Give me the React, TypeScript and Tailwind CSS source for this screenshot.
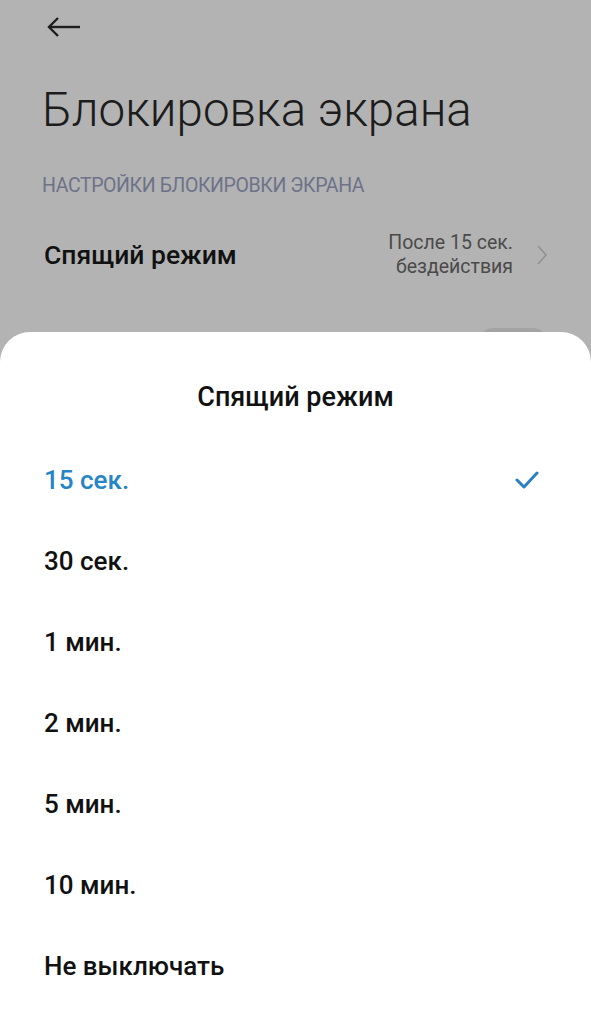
import { useState } from "react";

const options = ["15 сек.", "30 сек.", "1 мин.", "2 мин.", "5 мин.", "10 мин.", "Не выключать"];

export default function App() {
    const [selected, setSelected] = useState(0);

    return (
        <div
            className="relative h-[1011px] w-full overflow-hidden bg-[#b3b3b3]"
            style={{ fontFamily: "Roboto, 'Noto Sans', sans-serif" }}
        >
            {/* settings page behind the sheet */}
            <div className="px-[42px]">
                <div className="h-[54px] flex items-center pl-[5px]">
                    <svg width="34" height="20" viewBox="0 0 34 20" fill="none" stroke="#1e1e1e" strokeWidth="2.4">
                        <path d="M33 10H2" />
                        <path d="M11 1L2 10l9 9" />
                    </svg>
                </div>
                <h1 className="mt-[27px] text-[47.5px] leading-[58px] font-light text-[#1c1c1c]">
                    Блокировка экрана
                </h1>
                <div className="mt-[35px] text-[19.5px] leading-[24px] text-[#6d7289] tracking-[-0.4px]">
                    НАСТРОЙКИ БЛОКИРОВКИ ЭКРАНА
                </div>
                <div className="mt-[33px] flex items-center justify-between">
                    <span className="pl-[2px] text-[26.5px] font-medium text-[#111]">Спящий режим</span>
                    <div className="flex items-center gap-[24px] pr-[2px]">
                        <div className="text-right text-[19.5px] leading-[24px] text-[#4a4a4a]">
                            <div>После 15 сек.</div>
                            <div>бездействия</div>
                        </div>
                        <svg width="10" height="20" viewBox="0 0 10 20" fill="none" stroke="#8f8f8f" strokeWidth="1.4">
                            <path d="M1 1l8 9-8 9" />
                        </svg>
                    </div>
                </div>
                <div className="mt-[46px] flex items-center justify-between">
                    <span className="text-[26.5px] font-medium text-[#111]">Уведомления</span>
                    <div className="h-[34px] w-[72px] rounded-full bg-[#a3a3a3]" />
                </div>
            </div>

            {/* bottom sheet */}
            <div className="absolute left-0 right-0 top-[332px] bottom-0 rounded-t-[30px] bg-white">
                <div className="pt-[45px] text-center text-[27px] font-medium text-[#111]">Спящий режим</div>
                <div className="mt-[22px]">
                    {options.map((opt, i) => (
                        <button
                            key={opt}
                            onClick={() => setSelected(i)}
                            className="flex h-[81px] w-full items-center justify-between px-[44px] text-left"
                        >
                            <span
                                className={`text-[26px] font-medium ${
                                    selected === i ? "text-[#2585c5]" : "text-[#111]"
                                }`}
                            >
                                {opt}
                            </span>
                            {selected === i && (
                                <svg width="24" height="18" viewBox="0 0 24 18" fill="none" stroke="#2b7fc3" strokeWidth="3" strokeLinecap="round" strokeLinejoin="round" className="mr-[8px]">
                                    <path d="M2 9l7 7L22 2" />
                                </svg>
                            )}
                        </button>
                    ))}
                </div>
            </div>
        </div>
    );
}
